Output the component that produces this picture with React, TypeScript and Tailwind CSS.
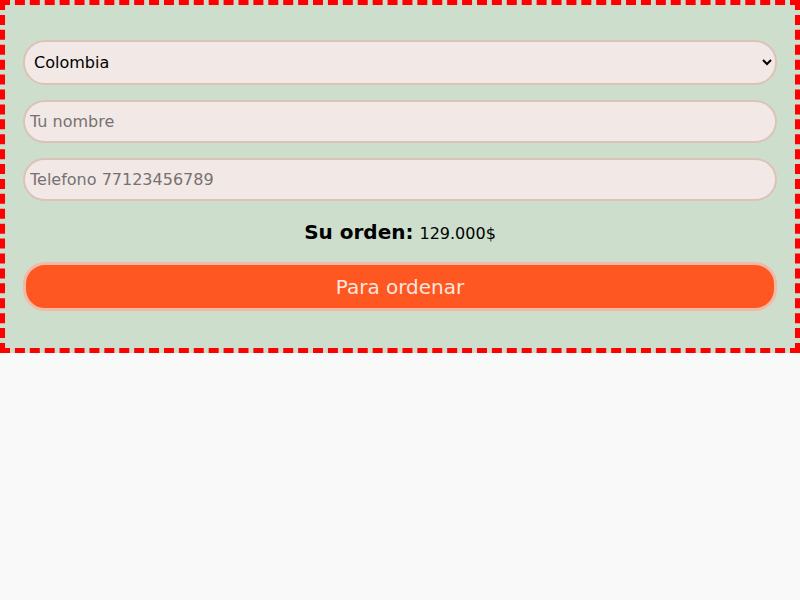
import React from "react";

export default function App() {
  return (
    <div className="min-h-[600px] bg-[#faf9fa]" style={{ fontFamily: '"DejaVu Sans", sans-serif' }}>
      <div className="border-[5px] border-dashed border-[#ff0000] bg-[#cddfcc] px-[18px] pt-[35px] pb-[37px]">
        <div className="flex flex-col gap-[15px]">
          <select
            defaultValue="Colombia"
            className="h-[45px] w-full rounded-[22px] border-2 border-[#dcc3b8] bg-[#f2e8e6] px-[5px] text-[16px] text-black"
            style={{ fontFamily: '"DejaVu Sans", sans-serif' }}
          >
            <option>Colombia</option>
            <option>México</option>
            <option>Perú</option>
          </select>
          <input
            placeholder="Tu nombre"
            className="h-[43px] w-full rounded-[22px] border-2 border-[#dcc3b8] bg-[#f2e8e6] px-[5px] text-[16px] placeholder:text-[#767272] outline-none"
          />
          <input
            placeholder="Telefono 77123456789"
            className="h-[43px] w-full rounded-[22px] border-2 border-[#dcc3b8] bg-[#f2e8e6] px-[5px] text-[16px] placeholder:text-[#767272] outline-none"
          />
        </div>
        <div className="mt-[16px] flex items-baseline justify-center gap-[6px] text-black">
          <span className="text-[20px] font-bold">Su orden:</span>
          <span className="text-[16px]">129.000$</span>
        </div>
        <button className="mt-[15px] h-[49px] w-full rounded-[22px] border-[3px] border-[#f2b9a8] bg-[#ff5722] text-[20px] text-[#fbe6df]">
          Para ordenar
        </button>
      </div>
    </div>
  );
}
